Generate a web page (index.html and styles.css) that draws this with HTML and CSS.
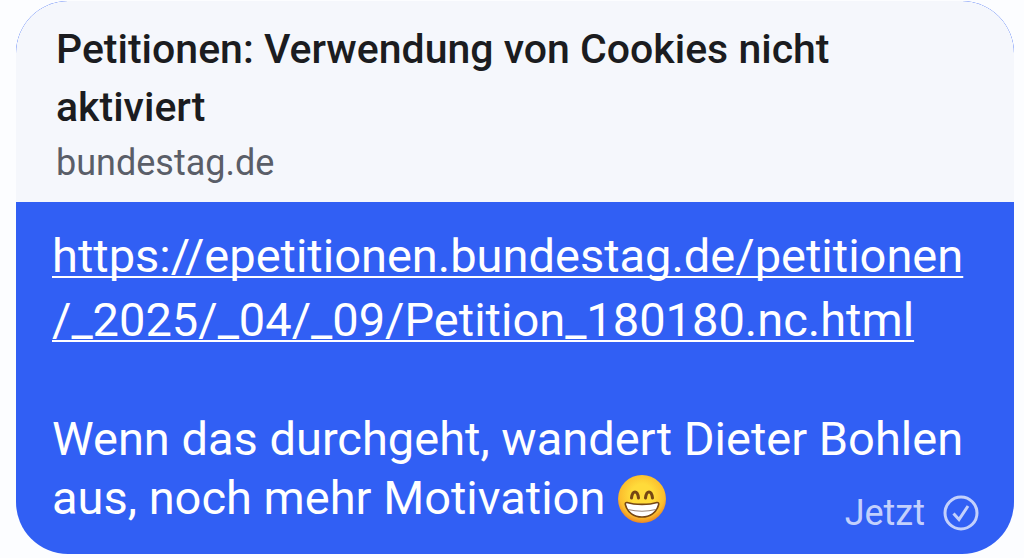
FILE: index.html
```html
<!DOCTYPE html>
<html lang="de">
<head>
    <meta charset="UTF-8">
    <meta name="viewport" content="width=device-width, initial-scale=1.0">
    <title>Chat</title>
    <link rel="stylesheet" href="styles.css">
</head>
<body>
    <article class="bubble">
        <header class="preview">
            <h1 class="preview-title">Petitionen: Verwendung von Cookies nicht aktiviert</h1>
            <p class="preview-domain">bundestag.de</p>
        </header>

        <div class="message">
            <a class="message-link" href="https://epetitionen.bundestag.de/petitionen/_2025/_04/_09/Petition_180180.nc.html">https://epetitionen.bundestag.de/petitionen<wbr>/_2025/_04/_09/Petition_180180.nc.html</a>
            <p class="message-text">Wenn das durchgeht, wandert Dieter Bohlen aus, noch mehr Motivation
                <svg class="emoji" viewBox="0 0 50 50" role="img" aria-label="😁">
                    <defs>
                        <radialGradient id="face" cx="50%" cy="42%" r="58%">
                            <stop offset="0.4" stop-color="#ffdb3a"/>
                            <stop offset="0.8" stop-color="#fbbd2d"/>
                            <stop offset="1" stop-color="#ec8723"/>
                        </radialGradient>
                    </defs>
                    <circle cx="25" cy="25" r="24" fill="url(#face)"/>
                    <path d="M14.5 24C15.500 16 20.500 16 21.500 24M28.500 24C29.500 16 34.500 16 35.500 24" fill="none" stroke="#754614" stroke-width="3" stroke-linecap="round"/>
                    <path d="M10 28.500C18 31 32 31 40 28.500C41.500 28.300 42 29.500 41.500 31C39.500 38.500 33 43 25 43S10.500 38.500 8.500 31C8 29.500 8.500 28.300 10 28.500Z" fill="#fff" stroke="#754614" stroke-width="1.600" stroke-linejoin="round"/>
                    <path d="M11 35.500Q25 39 39 35.500" fill="none" stroke="#9b8576" stroke-width="1.200"/>
                </svg>
            </p>
            <footer class="meta">
                <time>Jetzt</time>
                <svg class="check" viewBox="0 0 36 36" role="img" aria-label="Gesendet">
                    <circle cx="18" cy="18" r="16"/>
                    <path d="M10.500 18.500l5.500 6 9-13.500"/>
                </svg>
            </footer>
        </div>
    </article>
</body>
</html>
```
FILE: styles.css
```css
* {
    box-sizing: border-box;
}
body {
    margin: 0;
    padding: 1px 10px 4px 16px;
    background-color: #fcfdff;
    font-family: Roboto, "Noto Sans", sans-serif;
}
h1, p {
    margin: 0;
}
.bubble {
    border-radius: 52px;
    overflow: hidden;
    background-color: #315ff4;
}
.preview {
    padding: 19px 40px 12px;
    border-radius: 52px 52px 0 0;
    background-color: #f5f7fc;
}
.preview-title {
    font-size: 41px;
    font-weight: 500;
    line-height: 58px;
    color: #1b1c20;
}
.preview-domain {
    font-size: 36px;
    line-height: 54px;
    color: #5a5e68;
}
.message {
    position: relative;
    padding: 22px 36px 27px;
    color: #fff;
}
.message-link {
    display: block;
    margin-bottom: 57px;
    font-size: 47px;
    line-height: 64px;
    color: #fff;
    text-decoration: underline;
    text-decoration-thickness: 2px;
    text-underline-offset: 4px;
    text-decoration-skip-ink: none;
}
.message-text {
    font-size: 47px;
    line-height: 59px;
}
.emoji {
    width: 50px;
    height: 50px;
    vertical-align: -10px;
}
/* sits in the free space after the last line of the message */
.meta {
    position: absolute;
    right: 35px;
    bottom: 21px;
    display: flex;
    align-items: center;
    gap: 18px;
    font-size: 36px;
    line-height: 40px;
    color: #c3d0fc;
}
.check {
    width: 36px;
    height: 36px;
    fill: none;
    stroke: currentColor;
    stroke-width: 3;
}
```
